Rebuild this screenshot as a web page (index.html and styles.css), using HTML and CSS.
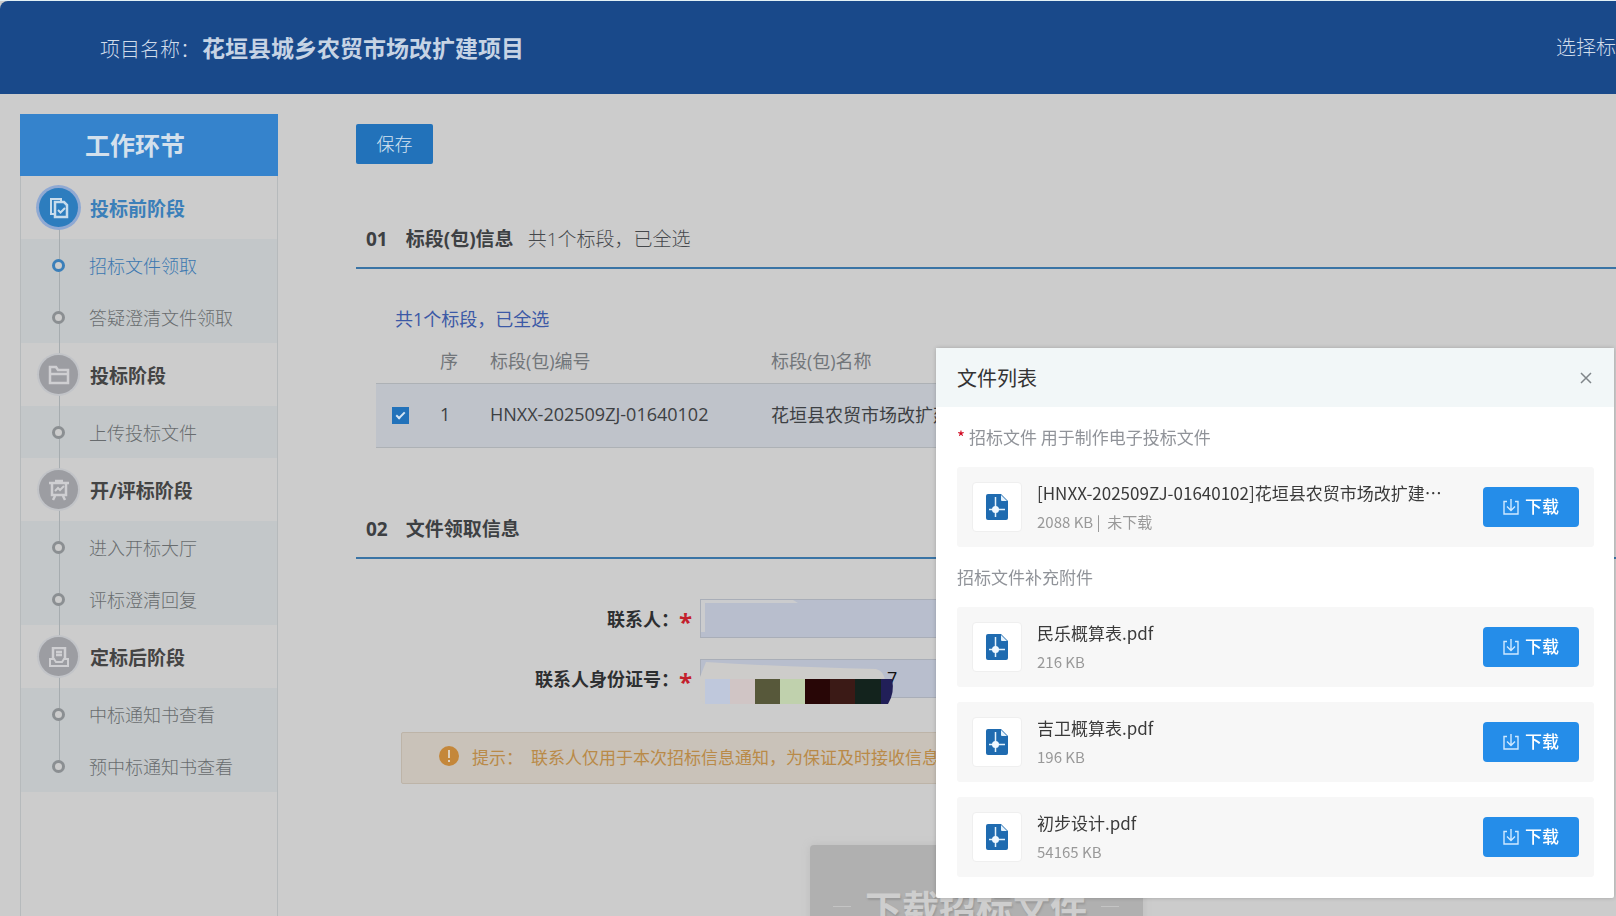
FILE: index.html
```html
<!DOCTYPE html>
<html lang="zh-CN">
<head>
  <meta charset="UTF-8" />
  <title>招标文件领取</title>
  <link rel="stylesheet" href="styles.css">
</head>
<body>
  <!-- shared icons -->
  <svg width="0" height="0" class="sprite">
    <symbol id="icon-file" viewBox="0 0 22 26">
      <path d="M2 0h13l7 7v17a2 2 0 0 1-2 2H2a2 2 0 0 1-2-2V2a2 2 0 0 1 2-2z" fill="#1f6bb0" />
      <path d="M15 1v5a1 1 0 0 0 1 1h5z" fill="#e4f2fc" />
      <path d="M9.500 3v20M3 15.500h16" stroke="#e4f2fc" stroke-width="1.500" />
      <circle cx="9.500" cy="15.500" r="3.500" fill="#f0f8ff" />
    </symbol>
    <symbol id="icon-download" viewBox="0 0 16 16">
      <path d="M4 2.500H1v12.500h14V2.500h-3M8 0v11M4 7.500l4 4 4-4" fill="none" stroke="#cfe9ff" stroke-width="1.400" />
    </symbol>
  </svg>

  <header class="header">
    <div class="project">项目名称：<strong>花垣县城乡农贸市场改扩建项目</strong></div>
    <div class="switch">选择标</div>
  </header>

  <div class="layout">
    <aside class="sidebar">
      <h2 class="sidebar-title">工作环节</h2>
      <nav class="steps">
        <div class="stage active">
          <span class="stage-icon">
            <svg width="20" height="22" viewBox="0 0 20 22" fill="none" stroke="#c8dcec" stroke-width="2">
              <path d="M5 17H2V2h10v3" />
              <path d="M6 5h9l3 3v12H6z" stroke-width="2.500" />
              <path d="M9 13l2.500 2.500L16 11" />
            </svg>
          </span>
          投标前阶段
        </div>
        <ul class="sub">
          <li><a href="#" class="current">招标文件领取</a></li>
          <li><a href="#">答疑澄清文件领取</a></li>
        </ul>
        <div class="stage">
          <span class="stage-icon">
            <svg width="22" height="20" viewBox="0 0 22 20" fill="none" stroke="#cfcfd2" stroke-width="2.500">
              <path d="M2 17V2h6l2 3h10v13H2z" />
              <path d="M2 9h18" />
            </svg>
          </span>
          投标阶段
        </div>
        <ul class="sub">
          <li><a href="#">上传投标文件</a></li>
        </ul>
        <div class="stage">
          <span class="stage-icon">
            <svg width="20" height="22" viewBox="0 0 20 22" fill="none" stroke="#cfcfd2" stroke-width="2">
              <path d="M6 2h8M0 4h20M3 4v12h14V4M6 17l-2 4M14 17l2 4" stroke-width="2.500" />
              <path d="M6 12l3-3 2 2 4-4" />
            </svg>
          </span>
          开/评标阶段
        </div>
        <ul class="sub">
          <li><a href="#">进入开标大厅</a></li>
          <li><a href="#">评标澄清回复</a></li>
        </ul>
        <div class="stage">
          <span class="stage-icon">
            <svg width="20" height="20" viewBox="0 0 20 20" fill="none" stroke="#cfcfd2" stroke-width="2">
              <path d="M4 12V1h12v11M7 5h6M7 8h6" stroke-width="2.500" />
              <path d="M1 12h4l2 3h6l2-3h4v7H1z" />
            </svg>
          </span>
          定标后阶段
        </div>
        <ul class="sub">
          <li><a href="#">中标通知书查看</a></li>
          <li><a href="#">预中标通知书查看</a></li>
        </ul>
      </nav>
    </aside>

    <main class="content">
      <button class="save">保存</button>

      <section class="section">
        <h3 class="section-title"><b>01</b><b>标段(包)信息</b><span>共1个标段，已全选</span></h3>
        <p class="summary">共1个标段，已全选</p>
        <table class="packages">
          <thead>
            <tr>
              <th class="col-check"></th>
              <th class="col-no">序</th>
              <th class="col-code">标段(包)编号</th>
              <th>标段(包)名称</th>
            </tr>
          </thead>
          <tbody>
            <tr>
              <td class="col-check"><input type="checkbox" id="pkg1" aria-label="选择标段" checked></td>
              <td>1</td>
              <td>HNXX-202509ZJ-01640102</td>
              <td>花垣县农贸市场改扩建</td>
            </tr>
          </tbody>
        </table>
      </section>

      <section class="section section-form">
        <h3 class="section-title"><b>02</b><b>文件领取信息</b></h3>
        <form class="form">
          <div class="row">
            <label for="contact">联系人：<i>*</i></label>
            <div class="field">
              <input type="text" id="contact">
              <svg class="mask" width="100" height="39" viewBox="0 0 100 39">
                <path d="M1 1h92l5 3H5v29H1z" fill="#cbccce" />
              </svg>
            </div>
          </div>
          <div class="row">
            <label for="idcard">联系人身份证号：<i>*</i></label>
            <div class="field">
              <input type="text" id="idcard" value="7">
              <!-- mosaic over the private digits -->
              <svg class="mask" width="200" height="48" viewBox="0 0 200 48">
                <path d="M6 3q80 5 170 7q8 2 9 12l2 23H4q-8-8-6-22z" fill="#cdccca" />
                <path d="M5 20h25v25H5z" fill="#bfc8dc" />
                <path d="M30 20h25v25H30z" fill="#d0c5c5" />
                <path d="M55 20h25v25H55z" fill="#57583a" />
                <path d="M80 20h25v25H80z" fill="#c0d1ad" />
                <path d="M105 20h25v25h-25z" fill="#280606" />
                <path d="M130 20h25v25h-25z" fill="#3b1a16" />
                <path d="M155 20h27v25h-27z" fill="#13231d" />
                <path d="M181 20h11q3 14-4 25h-7z" fill="#211f58" />
              </svg>
            </div>
          </div>
          <div class="notice">
            <svg width="20" height="20" viewBox="0 0 20 20">
              <circle cx="10" cy="10" r="10" fill="#c4873a" />
              <path d="M10 4v8M10 14v2" stroke="#ddd0bd" stroke-width="2" />
            </svg>
            <span>提示：</span>
            <span>联系人仅用于本次招标信息通知，为保证及时接收信息</span>
          </div>
          <div class="actions">
            <button type="button" class="big-download"><span class="dash"></span>下载招标文件<span class="dash"></span></button>
          </div>
        </form>
      </section>
    </main>
  </div>

  <div class="dialog" role="dialog" aria-labelledby="dialog-title">
    <div class="dialog-header">
      <h2 id="dialog-title">文件列表</h2>
      <button class="close" aria-label="关闭">
        <svg width="12" height="12" viewBox="0 0 12 12"><path d="M1 1l10 10M11 1L1 11" stroke="#80868a" stroke-width="1.500" /></svg>
      </button>
    </div>
    <div class="dialog-body">
      <p class="group"><i>*</i>招标文件 用于制作电子投标文件</p>
      <div class="files">
        <div class="file">
          <span class="thumb"><svg width="22" height="26"><use href="#icon-file" /></svg></span>
          <div class="info">
            <div class="name">[HNXX-202509ZJ-01640102]花垣县农贸市场改扩建…</div>
            <div class="meta">2088 KB |&nbsp; 未下载</div>
          </div>
          <button class="download"><svg width="16" height="16"><use href="#icon-download" /></svg><span>下载</span></button>
        </div>
      </div>
      <p class="group">招标文件补充附件</p>
      <div class="files">
        <div class="file">
          <span class="thumb"><svg width="22" height="26"><use href="#icon-file" /></svg></span>
          <div class="info">
            <div class="name">民乐概算表.pdf</div>
            <div class="meta">216 KB</div>
          </div>
          <button class="download"><svg width="16" height="16"><use href="#icon-download" /></svg><span>下载</span></button>
        </div>
        <div class="file">
          <span class="thumb"><svg width="22" height="26"><use href="#icon-file" /></svg></span>
          <div class="info">
            <div class="name">吉卫概算表.pdf</div>
            <div class="meta">196 KB</div>
          </div>
          <button class="download"><svg width="16" height="16"><use href="#icon-download" /></svg><span>下载</span></button>
        </div>
        <div class="file">
          <span class="thumb"><svg width="22" height="26"><use href="#icon-file" /></svg></span>
          <div class="info">
            <div class="name">初步设计.pdf</div>
            <div class="meta">54165 KB</div>
          </div>
          <button class="download"><svg width="16" height="16"><use href="#icon-download" /></svg><span>下载</span></button>
        </div>
      </div>
    </div>
  </div>
</body>
</html>
```
FILE: styles.css
```css
*, *::before, *::after {
  box-sizing: border-box;
}

html, body {
  height: 100%;
  margin: 0;
  padding: 0;
}

body {
  display: flex;
  flex-direction: column;
  overflow: hidden;
  border-top: 1px solid #e2f1f6;
  background-color: #cccccc;
  font-family: "Open Sans", "Noto Sans CJK SC", sans-serif;
  font-size: 18px;
  color: #3d4043;
}

h2, h3, p, ul {
  margin: 0;
  padding: 0;
}

button, input {
  font-family: inherit;
}

button {
  border: none;
  cursor: pointer;
}

i {
  font-style: normal;
}

.sprite {
  position: absolute;
}

.header {
  display: flex;
  flex-shrink: 0;
  justify-content: space-between;
  align-items: center;
  height: 93px;
  padding: 0 0 2px 100px;
  border-top-left-radius: 8px;
  background-color: #19498a;
  color: #d0dcea;
  font-size: 20px;
  font-weight: 300;
}

.project {
  display: flex;
  align-items: baseline;
}

.project strong {
  margin-left: 2px;
  color: #c6d3e4;
  font-size: 23px;
  font-weight: bold;
}

.layout {
  display: flex;
  flex: 1;
  min-height: 0;
}

/* sidebar */
.sidebar {
  flex-shrink: 0;
  width: 258px;
  margin: 20px 0 0 20px;
  border: solid #b6babc;
  border-width: 0 1px;
}

.sidebar-title {
  height: 62px;
  margin: 0 -1px;
  padding-left: 65px;
  background-color: #3583cc;
  color: #d3e0ec;
  font-size: 25px;
  line-height: 62px;
}

.steps {
  position: relative;
}

.steps::before {
  content: "";
  position: absolute;
  left: 38px;
  top: 31px;
  bottom: 26px;
  width: 1px;
  background-color: #a6acaf;
}

.stage {
  position: relative;
  display: flex;
  align-items: center;
  gap: 12px;
  height: 63px;
  padding-left: 18px;
  color: #444;
  font-size: 19px;
  font-weight: bold;
}

.stage.active {
  color: #3b7fb9;
}

.stage-icon {
  display: flex;
  align-items: center;
  justify-content: center;
  width: 39px;
  height: 39px;
  border-radius: 50%;
  background-color: #9c9da2;
  box-shadow: 0 0 0 2px #c2c4c8;
}

.active .stage-icon {
  background-color: #2d7dbe;
  box-shadow: 0 0 0 3px #8fa9d3;
}

.sub {
  background-color: #c3c7c9;
  list-style: none;
}

.sub a {
  position: relative;
  display: flex;
  align-items: center;
  gap: 24px;
  height: 52px;
  padding-left: 31px;
  color: #686c6e;
  font-weight: 300;
  text-decoration: none;
}

.sub a::before {
  content: "";
  width: 13px;
  height: 13px;
  border: 3px solid #8b8f92;
  border-radius: 50%;
  background-color: #ccc;
}

.sub a.current {
  color: #3b77b0;
}

.sub a.current::before {
  border-color: #3b7fb9;
}

/* main */
.content {
  flex: 1;
  min-width: 0;
  padding: 30px 0 0 78px;
}

.save {
  display: block;
  width: 77px;
  height: 40px;
  padding: 0 0 3px;
  border-radius: 2px;
  background-color: #2272ba;
  color: #d5e4f1;
  font-size: 18px;
  font-weight: 300;
}

.section {
  padding-top: 61px;
}

.section-form {
  padding-top: 67px;
}

.section-title {
  display: flex;
  gap: 14px;
  padding: 0 0 14px 10px;
  border-bottom: 2px solid #3a74a5;
  font-size: 19px;
  line-height: 28px;
  font-weight: normal;
}

.section-title b:first-child {
  margin-right: 4px;
}

.section-title span {
  color: #45484b;
  font-weight: 300;
}

.summary {
  margin: 38px 0 10px 39px;
  color: #3c59a6;
  line-height: 24px;
}

.packages {
  width: calc(100% - 40px);
  margin-left: 20px;
  border-collapse: collapse;
  table-layout: fixed;
  text-align: left;
}

.packages th {
  height: 42px;
  padding: 0 0 4px;
  color: #72767a;
  font-weight: normal;
}

.packages td {
  height: 64px;
  padding: 0 0 3px;
  border: solid #adb1b5;
  border-width: 1px 0;
  background-color: #bfc3ca;
  white-space: nowrap;
}

.col-check {
  width: 64px;
}

.packages .col-check {
  padding: 0 0 0 16px;
}

.col-no {
  width: 50px;
}

.col-code {
  width: 281px;
}

.packages input {
  display: flex;
  align-items: center;
  justify-content: center;
  width: 17px;
  height: 17px;
  margin: 0;
  appearance: none;
  background-color: #9fb4cc;
}

.packages input:checked {
  background-color: #2272ba;
}

.packages input:checked::before {
  content: "";
  width: 9px;
  height: 5px;
  border: solid #d5e6f5;
  border-width: 0 0 2px 2px;
  transform: translateY(-1px) rotate(-45deg);
}

.form {
  padding-top: 40px;
}

.row {
  display: flex;
  gap: 8px;
  margin-bottom: 21px;
}

.row label {
  display: flex;
  align-items: center;
  justify-content: flex-end;
  width: 336px;
  color: #2d2f31;
  font-weight: bold;
}

.row label i {
  height: 24px;
  color: #c3202c;
  font-size: 24px;
  line-height: 32px;
}

.field {
  position: relative;
  width: 460px;
}

.field input {
  display: block;
  width: 100%;
  height: 39px;
  padding: 0 0 0 186px;
  border: 1px solid #a9aeb8;
  background-color: #b8becd;
  color: #111;
  font-size: 18px;
}

.mask {
  position: absolute;
  left: 0;
  top: 0;
}

.notice {
  display: flex;
  align-items: center;
  height: 52px;
  margin: 34px 40px 0 45px;
  padding: 0 0 3px 37px;
  border: 1px solid #bdb4a8;
  border-radius: 2px;
  background-color: #c9c2b9;
  color: #b98a48;
  font-size: 17px;
  white-space: nowrap;
}

.notice span {
  margin-left: 13px;
}

.notice span + span {
  margin-left: 8px;
}

.actions {
  display: flex;
  justify-content: center;
  padding: 61px 20px 0 0;
}

.big-download {
  display: flex;
  align-items: center;
  justify-content: center;
  gap: 14px;
  width: 333px;
  height: 128px;
  padding: 0 0 4px;
  border-radius: 4px;
  background-color: #b0b0b0;
  box-shadow: 0 0 8px #bdbdbd;
  color: #cecece;
  font-size: 37px;
  font-weight: bold;
  white-space: nowrap;
  text-shadow: 1px 2px 2px #999;
}

.dash {
  width: 18px;
  height: 1px;
  background-color: #c4c4c4;
}

/* file list dialog */
.dialog {
  position: fixed;
  right: 2px;
  top: 348px;
  width: 678px;
  border-radius: 2px;
  background-color: #fff;
  box-shadow: 0 0 4px rgba(0, 0, 0, 0.2);
  font-family: "Noto Sans CJK SC", sans-serif;
}

.dialog-header {
  display: flex;
  align-items: center;
  justify-content: space-between;
  height: 59px;
  padding: 0 22px 0 21px;
  background-color: #f2f7f8;
}

.dialog-header h2 {
  color: #333;
  font-size: 20px;
  font-weight: normal;
}

.close {
  display: flex;
  padding: 0;
  background: none;
}

.dialog-body {
  padding: 0 20px 21px 21px;
}

.group {
  color: #909399;
  font-size: 17px;
  line-height: 60px;
}

.group i {
  margin-right: 4px;
  color: #d0021b;
}

.files {
  display: flex;
  flex-direction: column;
  gap: 15px;
}

.file {
  display: flex;
  align-items: center;
  height: 80px;
  padding: 0 15px;
  border-radius: 3px;
  background-color: #f7f7f7;
}

.thumb {
  display: flex;
  align-items: center;
  justify-content: center;
  width: 50px;
  height: 50px;
  border: 1px solid #efefef;
  border-radius: 4px;
  background-color: #fff;
}

.info {
  flex: 1;
  min-width: 0;
  margin-left: 15px;
}

.name {
  color: #3a3a3a;
  font-size: 17px;
  line-height: 30px;
  white-space: nowrap;
}

.meta {
  color: #999;
  font-size: 15px;
  line-height: 28px;
}

.download {
  display: flex;
  align-items: center;
  justify-content: center;
  gap: 6px;
  width: 96px;
  height: 40px;
  padding: 0;
  border-radius: 4px;
  background-color: #258de9;
  color: #fff;
  font-size: 17px;
  font-weight: 500;
}

.download span {
  padding-bottom: 4px;
}
```
